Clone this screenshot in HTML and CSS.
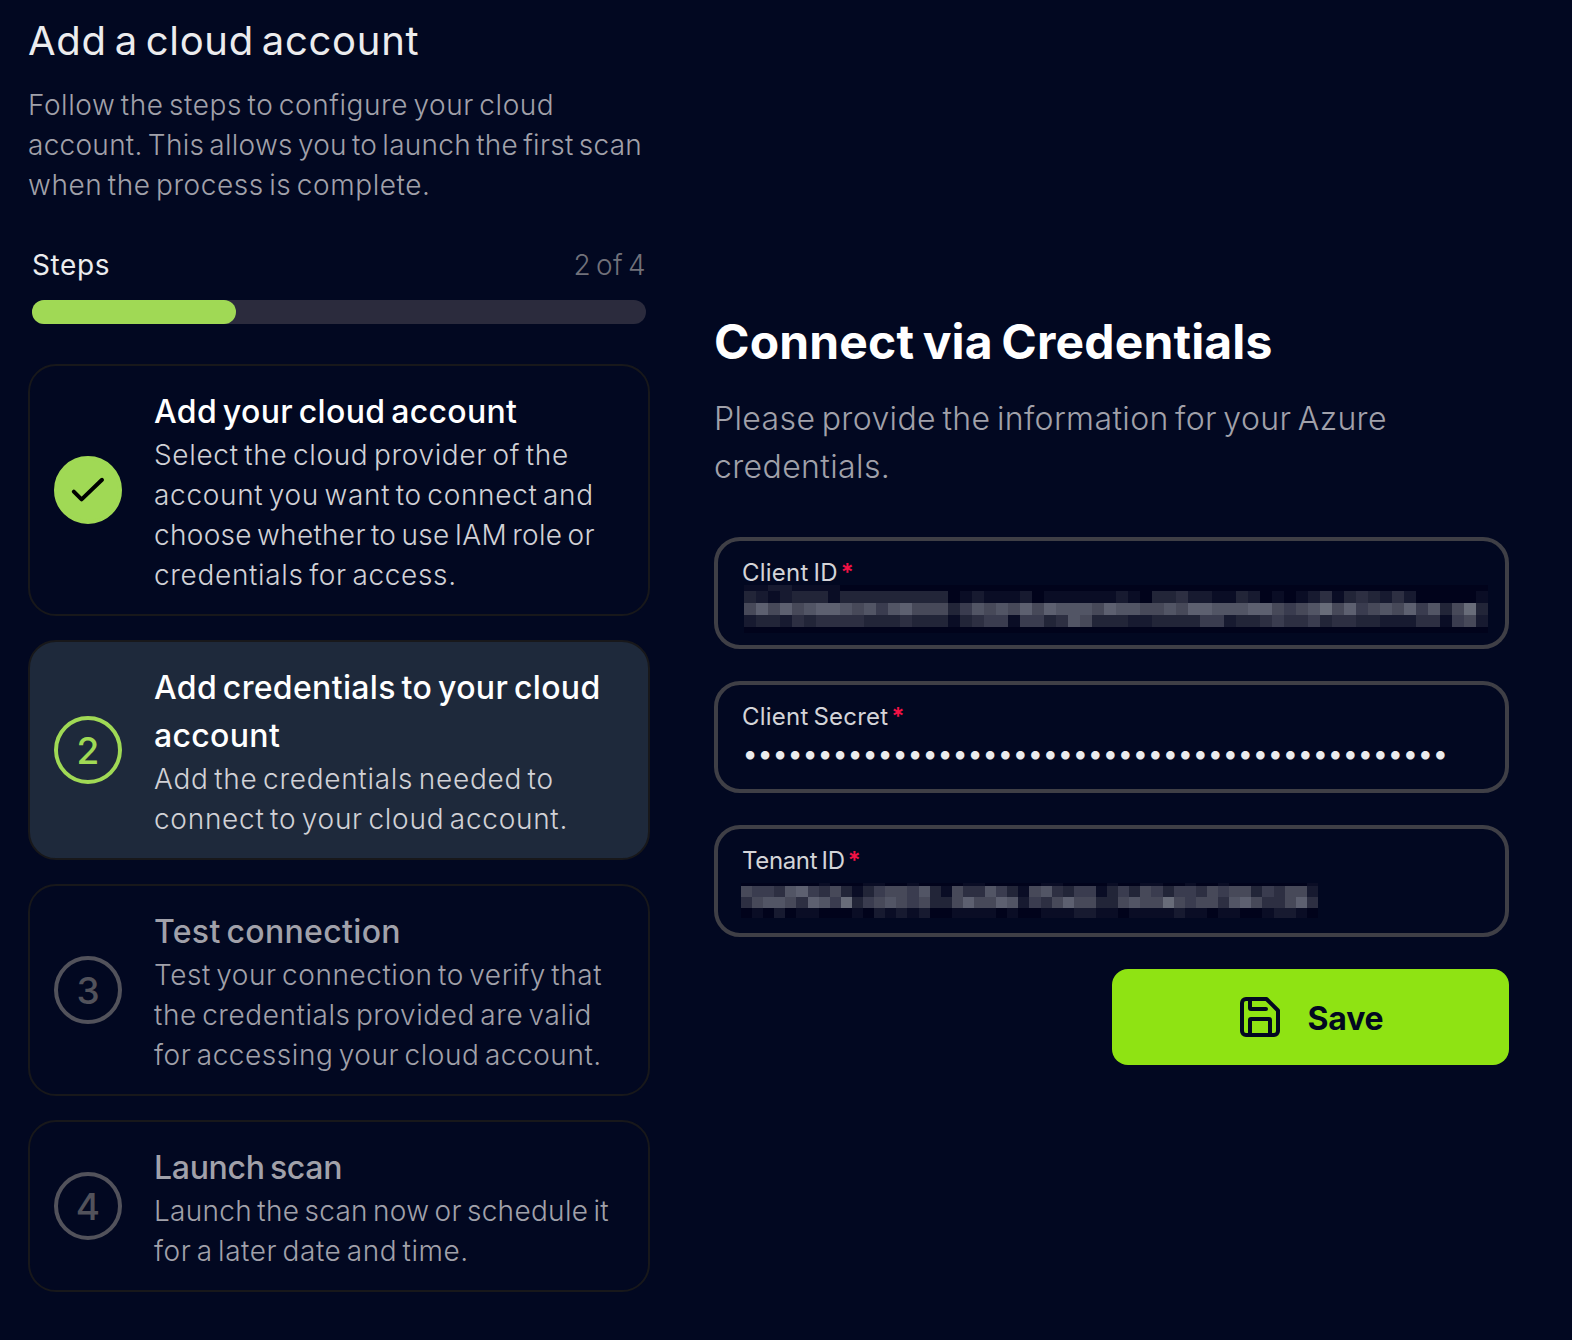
FILE: index.html
```html
<!DOCTYPE html>
<html lang="en">
<head>
<meta charset="utf-8">
<title>Add a cloud account</title>
<link rel="stylesheet" href="styles.css">
</head>
<body>
<div class="page">
  <aside class="sidebar">
    <h1 class="title">Add a cloud account</h1>
    <p class="intro">Follow the steps to configure your cloud<br><span class="tight">account. This allows you to launch the first scan</span><br>when the process is complete.</p>
    <div class="progress">
      <div class="progress-head"><span class="progress-label">Steps</span><span class="progress-value">2 of 4</span></div>
      <div class="track"><div class="fill"></div></div>
    </div>
    <ol class="steps">
      <li class="step done">
        <span class="badge"><svg width="68" height="68" viewBox="0 0 68 68"><path d="M19.8 35.6L27.6 43.4L48 23.8"/></svg></span>
        <div class="body">
          <h2 class="name">Add your cloud account</h2>
          <p class="text">Select the cloud provider of the<br>account you want to connect and<br><span class="tight">choose whether to use IAM role or</span><br>credentials for access.</p>
        </div>
      </li>
      <li class="step active">
        <span class="badge">2</span>
        <div class="body">
          <h2 class="name">Add credentials to your cloud<br>account</h2>
          <p class="text">Add the credentials needed to<br>connect to your cloud account.</p>
        </div>
      </li>
      <li class="step">
        <span class="badge">3</span>
        <div class="body">
          <h2 class="name">Test connection</h2>
          <p class="text">Test your connection to verify that<br>the credentials provided are valid<br>for accessing your cloud account.</p>
        </div>
      </li>
      <li class="step">
        <span class="badge">4</span>
        <div class="body">
          <h2 class="name tight">Launch scan</h2>
          <p class="text"><span class="tight">Launch the scan now or schedule it</span><br>for a later date and time.</p>
        </div>
      </li>
    </ol>
  </aside>
  <main class="form">
    <h2 class="form-title">Connect via Credentials</h2>
    <p class="form-text">Please provide the information for your Azure<br>credentials.</p>
    <div class="field">
      <span class="label">Client ID<b class="req">*</b></span>
      <div class="mosaic mosaic-client" data-rows="11221111000000000000000000000000000000000000000000000000000000 32123331333333333012111201111112103342211320101241343242000001 68686788767578666357676868777687766768877788656796856768573693 23324344443334333134551553476333223333552334544534433222441562 00000000000000000000000000000000000000000000000000000000000000"></div>
    </div>
    <div class="field">
      <span class="label">Client Secret<b class="req">*</b></span>
      <div class="dots">•••••••••••••••••••••••••••••••••••••••••••••••</div>
    </div>
    <div class="field">
      <span class="label tight">Tenant ID<b class="req">*</b></span>
      <div class="mosaic mosaic-tenant" data-rows="0000000100011001000011000001100001001100100100000001 6554785463135665731644753167435513536535546566354662 4677648759356765633686687254686633676696566478644684 0102011000102121200111101001112211011112110110012210"></div>
    </div>
    <button class="save">
      <svg width="40" height="40" viewBox="0 0 40 40"><path d="M6 2H26.5L38 13.5V34A4 4 0 0 1 34 38H6A4 4 0 0 1 2 34V6A4 4 0 0 1 6 2Z"/><path d="M10 3V11A1 1 0 0 0 11 12H26"/><path d="M10 37V23A1 1 0 0 1 11 22H29A1 1 0 0 1 30 23V37"/></svg>
      <span class="save-text">Save</span>
    </button>
  </main>
</div>
<script src="mosaic.js"></script>
</body>
</html>
```
FILE: styles.css
```css
* { box-sizing: border-box; margin: 0; padding: 0; }
body {
  background: #020821;
  color: #ececee;
  font-family: Inter, "Liberation Sans", sans-serif;
  word-spacing: -3px;
}
.page { display: flex; width: 1572px; height: 1340px; overflow: hidden; }
.sidebar { width: 650px; padding: 13px 0 0 28px; }
.title { font-size: 40px; line-height: 56px; font-weight: 400; letter-spacing: 0.7px; word-spacing: -4px; white-space: nowrap; }
.intro { margin-top: 16px; font-size: 28px; line-height: 40px; font-weight: 360; color: #a1a1aa; white-space: nowrap; letter-spacing: 0.57px; }
.progress { padding: 40px 4px 0; }
.progress-head { display: flex; justify-content: space-between; font-size: 28px; line-height: 40px; font-weight: 400; }
.progress-label { color: #ececee; letter-spacing: 0.6px; }
.progress-value { color: #71717a; font-weight: 360; letter-spacing: 0.3px; }
.track { margin-top: 15px; height: 24px; border-radius: 12px; background: #2b2b3d; }
.fill { width: 33.3%; height: 24px; border-radius: 12px; background: #a0d955; }
.steps { margin-top: 40px; list-style: none; display: flex; flex-direction: column; gap: 24px; }
.step {
  display: flex; align-items: center; gap: 32px;
  border: 2px solid #18181b; border-radius: 28px;
  padding: 20px 0 20px 24px;
  white-space: nowrap;
}
.body { padding-top: 2px; margin-bottom: -2px; }
.badge {
  width: 68px; height: 68px; flex: none; border-radius: 50%;
  border: 4px solid #52525b; color: #52525b;
  display: flex; align-items: center; justify-content: center;
  font-size: 37px; font-weight: 500;
}
.badge svg { flex: none; fill: none; stroke: #000; stroke-width: 4; stroke-linecap: round; stroke-linejoin: round; }
.name { font-size: 32px; line-height: 48px; font-weight: 450; color: #a1a1aa; letter-spacing: 0.33px; }
.name.tight { letter-spacing: -0.3px; }
.text { font-size: 28px; line-height: 40px; font-weight: 360; color: #a1a1aa; letter-spacing: 0.55px; margin-top: -1px; margin-bottom: 1px; }
.intro .tight { letter-spacing: 0.27px; }
.text .tight { letter-spacing: 0.3px; }
.done .badge { background: #a0d955; border-color: #a0d955; }
.active { background: #1e293b; }
.active .badge { border-color: #a0d955; color: #a0d955; }
.done .text { letter-spacing: 0.67px; }
.active .text { letter-spacing: 0.72px; }
.done .name, .active .name { color: #fff; }
.done .text, .active .text { color: #d1d1d6; }
.form { width: 795px; margin-left: 64px; padding-top: 306px; display: flex; flex-direction: column; }
.form-title { font-size: 48px; line-height: 72px; font-weight: 700; color: #fff; letter-spacing: 0.15px; }
.form-text { margin-top: 17px; margin-bottom: 46px; font-size: 32px; line-height: 48px; font-weight: 360; color: #a1a1aa; letter-spacing: 0.38px; white-space: nowrap; }
.field { height: 112px; border: 4px solid #3f3f46; border-radius: 26px; padding: 16px 24px 0; margin-bottom: 32px; }
.label { display: block; font-size: 24px; line-height: 32px; color: #d4d4d8; letter-spacing: 0.22px; word-spacing: -2px; }
.label.tight { letter-spacing: -0.35px; }
.req { color: #f31245; font-weight: 600; margin-left: 3px; }
.dots { font-size: 27px; line-height: 40px; letter-spacing: -0.18px; white-space: nowrap; margin: 1px 0 0 0.5px; }
.mosaic { display: grid; width: max-content; }
.mosaic-client { grid-template-columns: repeat(62, 12px); grid-template-rows: 6px 12px 12px 12px 6px; margin: -4px 0 0 2px; }
.mosaic-tenant { grid-template-columns: repeat(52, 11.1px); grid-template-rows: 3px 11px 11px 10px; margin: 6px 0 0 -1px; }
.m0 { background: #01031b; } .m1 { background: #0a0d25; } .m2 { background: #171a30; }
.m3 { background: #222538; } .m4 { background: #2d2f42; } .m5 { background: #3a3c4f; }
.m6 { background: #474959; } .m7 { background: #525565; } .m8 { background: #5d6070; }
.m9 { background: #686c79; }
.save {
  align-self: flex-end; width: 397px; height: 96px; border: 0; border-radius: 16px;
  background: #8fe313; color: #020821;
  display: flex; align-items: center; justify-content: center; gap: 28px;
  padding-left: 2px;
  font: 700 32px/48px Inter, sans-serif; letter-spacing: -0.2px;
}
.save-text { padding-top: 3px; }
.save svg { fill: none; stroke: #020821; stroke-width: 4; stroke-linecap: round; stroke-linejoin: round; }
```
FILE: mosaic.js
```js
// Fills each redacted value with a grid of shaded cells, one digit per cell.
document.querySelectorAll('.mosaic').forEach(function (el) {
  el.dataset.rows.replace(/ /g, '').split('').forEach(function (d) {
    var cell = document.createElement('i');
    cell.className = 'm' + d;
    el.appendChild(cell);
  });
});
```
